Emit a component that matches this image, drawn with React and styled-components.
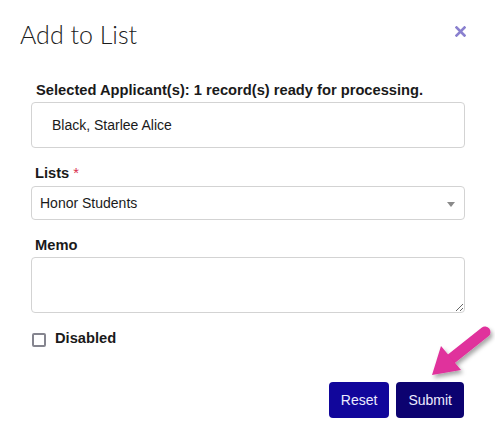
import React, { useState } from "react";
import styled, { createGlobalStyle } from "styled-components";

const GlobalStyle = createGlobalStyle`
  html, body {
    margin: 0;
    padding: 0;
    background: #ffffff;
  }
  body {
    font-family: "Liberation Sans", Arial, sans-serif;
  }
`;

const Modal = styled.div`
  position: relative;
  width: 495px;
  height: 428px;
  background: #fff;
  overflow: hidden;
`;

const Header = styled.header`
  display: flex;
  align-items: center;
  justify-content: space-between;
  padding: 19px 29px 0 20px;
`;

const Title = styled.h2`
  margin: 0;
  font-family: Lato, "Open Sans", sans-serif;
  font-weight: 300;
  font-size: 25px;
  line-height: 30px;
  color: #1b1b1b;
`;

const CloseBtn = styled.button`
  display: flex;
  align-items: center;
  justify-content: center;
  width: 12px;
  height: 12px;
  margin-top: -5px;
  padding: 0;
  border: none;
  background: none;
  cursor: pointer;
`;

const Body = styled.form`
  display: flex;
  flex-direction: column;
  padding: 0 30px 0 31px;
`;

const Label = styled.label`
  display: block;
  margin-top: ${(p) => p.$mt}px;
  padding-left: ${(p) => p.$pl ?? 4}px;
  font-size: 14.7px;
  font-weight: 700;
  line-height: 18px;
  color: #1a1a1a;
`;

const Required = styled.span`
  color: #d9304f;
  font-weight: 400;
  margin-left: 4px;
`;

const TextBox = styled.div`
  box-sizing: border-box;
  margin-top: ${(p) => p.$mt}px;
  height: ${(p) => p.$h}px;
  display: flex;
  align-items: center;
  padding-left: ${(p) => p.$pl}px;
  border: 1px solid #d3d3d3;
  border-radius: 4px;
  font-size: 14px;
  color: #1a1a1a;
`;

const SelectWrap = styled(TextBox)`
  position: relative;
  justify-content: space-between;
  padding-right: 9px;
`;

const Caret = styled.span`
  width: 0;
  height: 0;
  border-left: 4px solid transparent;
  border-right: 4px solid transparent;
  border-top: 5px solid #8a8a8a;
  margin-top: 3px;
`;

const Memo = styled.textarea`
  box-sizing: border-box;
  margin-top: 3px;
  height: 56px;
  width: 100%;
  border: 1px solid #d3d3d3;
  border-radius: 4px;
  font-family: inherit;
  font-size: 14px;
  resize: vertical;
  outline: none;
`;

const CheckRow = styled.label`
  display: flex;
  align-items: center;
  gap: 9px;
  margin-top: 16px;
  font-size: 14.7px;
  font-weight: 700;
  line-height: 18px;
  color: #1a1a1a;
`;

const Check = styled.input`
  appearance: none;
  box-sizing: border-box;
  width: 14px;
  height: 14px;
  margin: 4px 0 0 1px;
  border: 2px solid #85858f;
  border-radius: 2px;
  background: #fff;
`;

const Actions = styled.div`
  display: flex;
  justify-content: flex-end;
  gap: 7px;
  margin-top: 35px;
  padding-right: 1px;
`;

const Button = styled.button`
  height: 36px;
  padding: 0 12px;
  border: none;
  border-radius: 4px;
  background: ${(p) => (p.$dark ? "#0c0270" : "#11069b")};
  color: #ecebff;
  font-family: "Liberation Sans", Arial, sans-serif;
  font-size: 14px;
  cursor: pointer;
`;

const Pointer = styled.svg`
  position: absolute;
  left: 424px;
  top: 321px;
  pointer-events: none;
`;

export default function App() {
  const [disabled, setDisabled] = useState(false);
  return (
    <Modal>
      <GlobalStyle />
      <Header>
        <Title>Add to List</Title>
        <CloseBtn type="button" aria-label="Close">
          <svg width="11" height="11" viewBox="0 0 11 11">
            <path d="M1.5 1.5 L9.5 9.5 M9.5 1.5 L1.5 9.5" stroke="#8a80cf" strokeWidth="2.6" strokeLinecap="square" />
          </svg>
        </CloseBtn>
      </Header>
      <Body onSubmit={(e) => e.preventDefault()}>
        <Label $mt={32} $pl={5}>Selected Applicant(s): 1 record(s) ready for processing.</Label>
        <TextBox $mt={3} $h={46} $pl={20}>Black, Starlee Alice</TextBox>

        <Label $mt={16}>
          Lists<Required>*</Required>
        </Label>
        <SelectWrap $mt={4} $h={34} $pl={8}>
          Honor Students
          <Caret />
        </SelectWrap>

        <Label $mt={16}>Memo</Label>
        <Memo />

        <CheckRow>
          <Check type="checkbox" checked={disabled} onChange={(e) => setDisabled(e.target.checked)} />
          Disabled
        </CheckRow>

        <Actions>
          <Button type="reset">Reset</Button>
          <Button type="submit" $dark>Submit</Button>
        </Actions>
      </Body>

      <Pointer width="72" height="66" viewBox="0 0 72 66">
        <defs>
          <filter id="sh" x="-30%" y="-30%" width="160%" height="160%">
            <feDropShadow dx="2" dy="3" stdDeviation="2" floodColor="#000" floodOpacity="0.35" />
          </filter>
        </defs>
        <g filter="url(#sh)">
          <line x1="27" y1="38" x2="61" y2="11" stroke="#e0309c" strokeWidth="11" strokeLinecap="round" />
          <polygon points="8,54 17,25 37,49" fill="#e0309c" />
        </g>
      </Pointer>
    </Modal>
  );
}
